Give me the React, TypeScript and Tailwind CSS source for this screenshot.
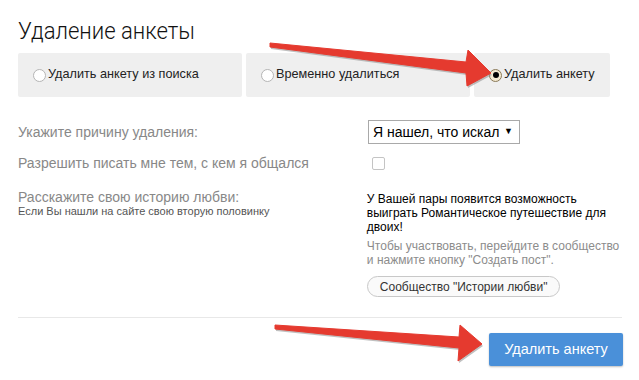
const Radio = ({ checked = false }: { checked?: boolean }) => (
  <span
    className={
      checked
        ? 'flex h-[13px] w-[13px] items-center justify-center rounded-full border border-[#8a7a5a] bg-[#f4e9cf]'
        : 'h-[13px] w-[13px] rounded-full border border-[#b5b5b5] bg-white'
    }
  >
    {checked && <span className="h-[6px] w-[6px] rounded-full bg-black" />}
  </span>
)

const tabs = [
  { label: 'Удалить анкету из поиска', width: 'w-[224px]' },
  { label: 'Временно удалиться', width: 'w-[224px]' },
  { label: 'Удалить анкету', width: 'w-[136px]', checked: true },
]

const Arrows = () => (
  <svg className="pointer-events-none absolute inset-0" width="639" height="380">
    {/* тень */}
    <g fill="#8c8c8c" opacity="0.55" transform="translate(1 2)">
      <polygon points="270,43 466,62 468,50 491,73 467,86 466,73 270,47" />
      <polygon points="275,325 459,337 460,325 482,344 458,361 459,348 275,329" />
    </g>
    <g fill="#e53a2f" stroke="#e53a2f" strokeWidth="1" strokeLinejoin="round">
      <polygon points="270,43 466,62 468,50 491,73 467,86 466,73 270,47" />
      <polygon points="275,325 459,337 460,325 482,344 458,361 459,348 275,329" />
    </g>
  </svg>
)

export default function App() {
  return (
    <div className="relative h-[380px] w-[639px] overflow-hidden bg-white font-['Liberation_Sans',Arial,sans-serif] text-[#222]">
      <div className="pl-[18px] pr-[17px] pt-[16px]">
        {/* Заголовок */}
        <h1 className="origin-left scale-x-[0.92] font-['Roboto',sans-serif] text-[24px] font-light leading-[30px] text-[#111]">
          Удаление анкеты
        </h1>

        {/* Варианты удаления */}
        <div className="mt-[7px] flex gap-[4px]">
          {tabs.map((t) => (
            <div
              key={t.label}
              className={`${t.width} flex h-[44px] items-center gap-[2px] rounded-[2px] bg-[#efefef] pl-[15px] text-[12.7px]`}
            >
              <Radio checked={t.checked} />
              <span>{t.label}</span>
            </div>
          ))}
        </div>

        {/* Форма */}
        <div className="mt-[23px] flex h-[24px] items-center">
          <div className="w-[350px] text-[14px] text-[#888]">Укажите причину удаления:</div>
          <div className="flex h-[24px] w-[152px] items-center justify-between border border-[#a9a9a9] pl-[4px] pr-[6px] text-[14px] text-black">
            <span>Я нашел, что искал</span>
            <span className="text-[9px]">▼</span>
          </div>
        </div>

        <div className="mt-[12px] flex h-[14px] items-center">
          <div className="w-[350px] text-[14px] text-[#888]">Разрешить писать мне тем, с кем я общался</div>
          <div className="ml-[4px] h-[13px] w-[13px] rounded-[2px] border border-[#c4c4c4] bg-white" />
        </div>

        <div className="mt-[20px] flex">
          <div className="w-[350px]">
            <div className="text-[14px] leading-[15px] text-[#888]">Расскажите свою историю любви:</div>
            <div className="text-[11px] leading-[12px] text-[#555]">
              Если Вы нашли на сайте свою вторую половинку
            </div>
          </div>
          <div className="w-[256px] pt-[2px] text-[12px] leading-[14px]">
            <p className="text-black">
              У Вашей пары появится возможность выиграть Романтическое путешествие для двоих!
            </p>
            <p className="mt-[5px] text-[#8c8c8c]">
              Чтобы участвовать, перейдите в сообщество и нажмите кнопку "Создать пост".
            </p>
            <button className="mt-[9px] h-[21px] rounded-full border border-[#c8c8c8] bg-[#fafafa] px-[12px] text-[12px] text-[#333]">
              Сообщество "Истории любви"
            </button>
          </div>
        </div>

        <div className="mt-[20px] h-px w-[604px] bg-[#e8e8e8]" />

        <div className="flex w-[605px] justify-end pt-[15px]">
          <button className="h-[33px] w-[134px] rounded-[2px] bg-[#4a90d9] text-[14.5px] text-white shadow-[0_1px_2px_rgba(0,0,0,0.25)]">
            Удалить анкету
          </button>
        </div>
      </div>

      <Arrows />
    </div>
  )
}
